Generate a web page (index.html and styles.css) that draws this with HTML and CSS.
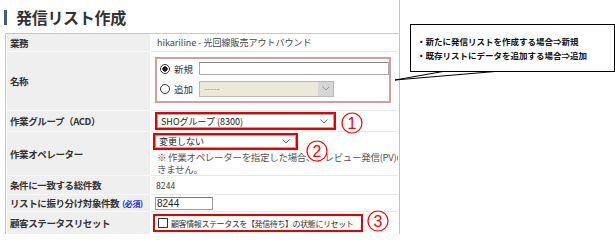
FILE: index.html
```html
<!DOCTYPE html>
<html lang="ja">

<head>
    <meta charset="utf-8">
    <title>発信リスト作成</title>
    <link rel="stylesheet" href="styles.css">
</head>

<body>
    <div class="page">
        <div class="shot">
            <div class="title">
                <span class="bar"></span>
                <h1>発信リスト作成</h1>
            </div>
            <table class="form">
                <tr class="r-gyomu">
                    <th>業務</th>
                    <td><span class="val">hikariline - 光回線販売アウトバウンド</span></td>
                </tr>
                <tr class="r-name">
                    <th>名称</th>
                    <td>
                        <div class="pinkbox">
                            <div class="opt first">
                                <span class="radio on"></span>
                                <span class="optlabel">新規</span>
                                <span class="textbox"></span>
                            </div>
                            <div class="opt">
                                <span class="radio"></span>
                                <span class="optlabel">追加</span>
                                <span class="select disabled">
                                    <span class="seltext">-----</span>
                                    <span class="arrow"><svg width="8" height="5" viewBox="0 0 8 5"><polyline points="0.5,0.5 4,4 7.5,0.5" fill="none" stroke="#999"/></svg></span>
                                </span>
                            </div>
                        </div>
                    </td>
                </tr>
                <tr class="r-group">
                    <th>作業グループ（ACD）</th>
                    <td>
                        <div class="redbox group">
                            <span class="select">
                                <span class="seltext">SHOグループ (8300)</span>
                                <svg class="chev" width="8" height="5" viewBox="0 0 8 5"><polyline points="0.5,0.5 4,4 7.5,0.5" fill="none" stroke="#777"/></svg>
                            </span>
                        </div>
                    </td>
                </tr>
                <tr class="r-oper">
                    <th>作業オペレーター</th>
                    <td>
                        <div class="redbox oper">
                            <span class="select">
                                <span class="seltext">変更しない</span>
                                <svg class="chev" width="8" height="5" viewBox="0 0 8 5"><polyline points="0.5,0.5 4,4 7.5,0.5" fill="none" stroke="#777"/></svg>
                            </span>
                        </div>
                        <p class="note">※ 作業オペレーターを指定した場合、プレビュー発信(PV)のみ利用で<br>きません。</p>
                    </td>
                </tr>
                <tr class="r-total">
                    <th>条件に一致する総件数</th>
                    <td><span class="num-val">8244</span></td>
                </tr>
                <tr class="r-count">
                    <th>リストに振り分け対象件数<span class="req">(必須)</span></th>
                    <td><span class="input">8244</span></td>
                </tr>
                <tr class="r-reset">
                    <th>顧客ステータスリセット</th>
                    <td>
                        <div class="redbox reset">
                            <span class="check"></span>
                            <span class="checktext">顧客情報ステータスを【発信待ち】の状態にリセット</span>
                        </div>
                    </td>
                </tr>
            </table>
        </div>

        <!-- annotations -->
        <svg class="pointer" width="110" height="20" viewBox="0 0 110 20">
            <polygon points="5,14 53,5.5 105,5.5" fill="#fff" stroke="#000" stroke-width="1"/>
        </svg>
        <div class="callout">
            <p>・新たに発信リストを作成する場合⇒新規</p>
            <p>・既存リストにデータを追加する場合⇒追加</p>
        </div>

        <svg class="mark m1" width="22" height="22" viewBox="0 0 22 22">
            <circle cx="11" cy="11" r="10" fill="#fff" stroke="#f00" stroke-width="1.2"/>
            <text x="11" y="17" text-anchor="middle">1</text>
        </svg>
        <svg class="mark m2" width="22" height="22" viewBox="0 0 22 22">
            <circle cx="11" cy="11" r="10" fill="#fff" stroke="#f00" stroke-width="1.2"/>
            <text x="11" y="17" text-anchor="middle">2</text>
        </svg>
        <svg class="mark m3" width="22" height="22" viewBox="0 0 22 22">
            <circle cx="11" cy="11" r="10" fill="#fff" stroke="#f00" stroke-width="1.2"/>
            <text x="11" y="17" text-anchor="middle">3</text>
        </svg>
    </div>
</body>

</html>
```

FILE: styles.css
```css
* {
    box-sizing: border-box;
}

body {
    margin: 0;
    background-color: #fff;
    font-family: "Noto Sans CJK JP", "Liberation Sans", sans-serif;
    color: #333;
}

.page {
    position: relative;
    width: 615px;
    height: 248px;
    overflow: hidden;
}

.shot {
    width: 400px;
    height: 234px;
    border-right: 1px solid #c4c4c4;
    overflow: hidden;
}

.title {
    height: 33px;
    display: flex;
    align-items: center;
    padding: 1px 0 0 4px;
}

.title .bar {
    width: 3px;
    height: 15px;
    background-color: #46606e;
}

h1 {
    margin: 0 0 0 9px;
    font-size: 16px;
    font-weight: bold;
    color: #333;
    letter-spacing: -0.3px;
}

.form {
    margin-left: 5px;
    width: 394px;
    border-collapse: separate;
    border-spacing: 1px 0;
    border: 1px solid #c8c8c8;
    border-right: none;
    table-layout: fixed;
}

th {
    width: 143px;
    background-color: #efefef;
    text-align: left;
    font-size: 9.5px;
    font-weight: bold;
    color: #333;
    padding: 0 0 0 3px;
    border-bottom: 1px solid #fafafa;
    white-space: nowrap;
    letter-spacing: -0.4px;
}

td {
    padding: 0;
    border-bottom: 1px solid #e9e9e9;
    vertical-align: middle;
    font-size: 9px;
    color: #444;
    overflow: hidden;
}

.r-gyomu th, .r-gyomu td { height: 18px; }
.r-name th, .r-name td { height: 59px; }
.r-group th, .r-group td { height: 21px; }
.r-oper th, .r-oper td { height: 42px; }
.r-total th, .r-total td { height: 19px; }
.r-count th, .r-count td { height: 17px; }
.r-reset th, .r-reset td { height: 22px; border-bottom: none; }

.val {
    padding-left: 6px;
    white-space: nowrap;
}

/* 名称 */
.r-name td {
    vertical-align: top;
    padding-top: 5px;
}

.pinkbox {
    margin-left: 4px;
    width: 236px;
    height: 46px;
    border: 2px solid #d99c9c;
}

.opt {
    display: flex;
    align-items: center;
    height: 21px;
}

.opt.first {
    height: 19px;
}

.radio {
    flex-shrink: 0;
    width: 10px;
    height: 10px;
    margin-left: 3px;
    border: 1px solid #333;
    border-radius: 50%;
    background-color: #fff;
}

.radio.on {
    background: radial-gradient(circle, #1a1a1a 0 2.4px, #fff 2.9px);
}

.optlabel {
    margin-left: 4px;
    width: 20px;
    font-size: 9.5px;
    color: #333;
}

.textbox {
    margin-left: 5px;
    width: 190px;
    height: 13px;
    border: 1px solid #aaa;
    border-top-color: #888;
    background-color: #fff;
}

.select {
    display: flex;
    align-items: center;
    height: 14px;
    border: 1px solid #a8a8a8;
    background-color: #fff;
    padding-left: 3px;
    font-size: 9px;
    color: #222;
    white-space: nowrap;
}

.select .seltext {
    flex: 1;
}

.select .chev {
    margin-right: 5px;
}

.select.disabled {
    margin-left: 5px;
    width: 135px;
    height: 16px;
    background-color: #ece9d8;
    border-color: #b8b8b8;
    color: #999;
    padding-left: 4px;
}

.select.disabled .arrow {
    display: flex;
    align-items: center;
    justify-content: center;
    width: 15px;
    height: 100%;
    background-color: #d6d6d6;
}

/* red marks */
.redbox {
    border: 2px solid #e60000;
}

.redbox.group {
    margin-left: 4px;
    width: 181px;
    height: 18px;
}

.redbox.oper {
    margin-left: 2px;
    width: 145px;
    height: 17px;
}

.redbox .select {
    height: 100%;
}

.r-oper td {
    vertical-align: top;
    padding-top: 1px;
}

.note {
    margin: 1px 0 0 0;
    padding-left: 6px;
    font-size: 9.5px;
    line-height: 12px;
    color: #555;
    white-space: nowrap;
    letter-spacing: -0.3px;
}

.num-val {
    padding-left: 5px;
    font-family: "DejaVu Sans Mono", monospace;
    font-size: 8px;
    color: #444;
}

.req {
    margin-left: 3px;
    font-size: 8px;
    color: #2a2acc;
}

.input {
    display: block;
    margin-left: 4px;
    width: 58px;
    height: 13px;
    border: 1px solid #999;
    border-top-color: #777;
    padding-left: 1px;
    font-family: "Liberation Sans", sans-serif;
    font-size: 10px;
    line-height: 11px;
    color: #222;
}

.redbox.reset {
    margin-left: 2px;
    width: 210px;
    height: 18px;
    display: flex;
    align-items: center;
    padding-left: 3px;
    overflow: hidden;
}

.check {
    flex-shrink: 0;
    width: 10px;
    height: 10px;
    border: 1px solid #333;
    background-color: #fff;
}

.checktext {
    margin-left: 3px;
    font-size: 8px;
    color: #333;
    white-space: nowrap;
    letter-spacing: -0.4px;
}

/* annotations */
.callout {
    position: absolute;
    left: 410px;
    top: 24px;
    width: 205px;
    height: 48px;
    border: 1px solid #000;
    background-color: #fff;
    padding: 9px 0 0 6px;
}

.callout p {
    margin: 0;
    font-size: 8.5px;
    line-height: 14px;
    font-weight: bold;
    color: #111;
    white-space: nowrap;
}

.pointer {
    position: absolute;
    left: 390px;
    top: 66px;
}

.mark {
    position: absolute;
}

.mark text {
    font-family: "Liberation Sans", sans-serif;
    font-size: 16px;
    fill: #f00;
}

.m1 { left: 341px; top: 112px; }
.m2 { left: 306px; top: 140px; }
.m3 { left: 367px; top: 210px; }
```
